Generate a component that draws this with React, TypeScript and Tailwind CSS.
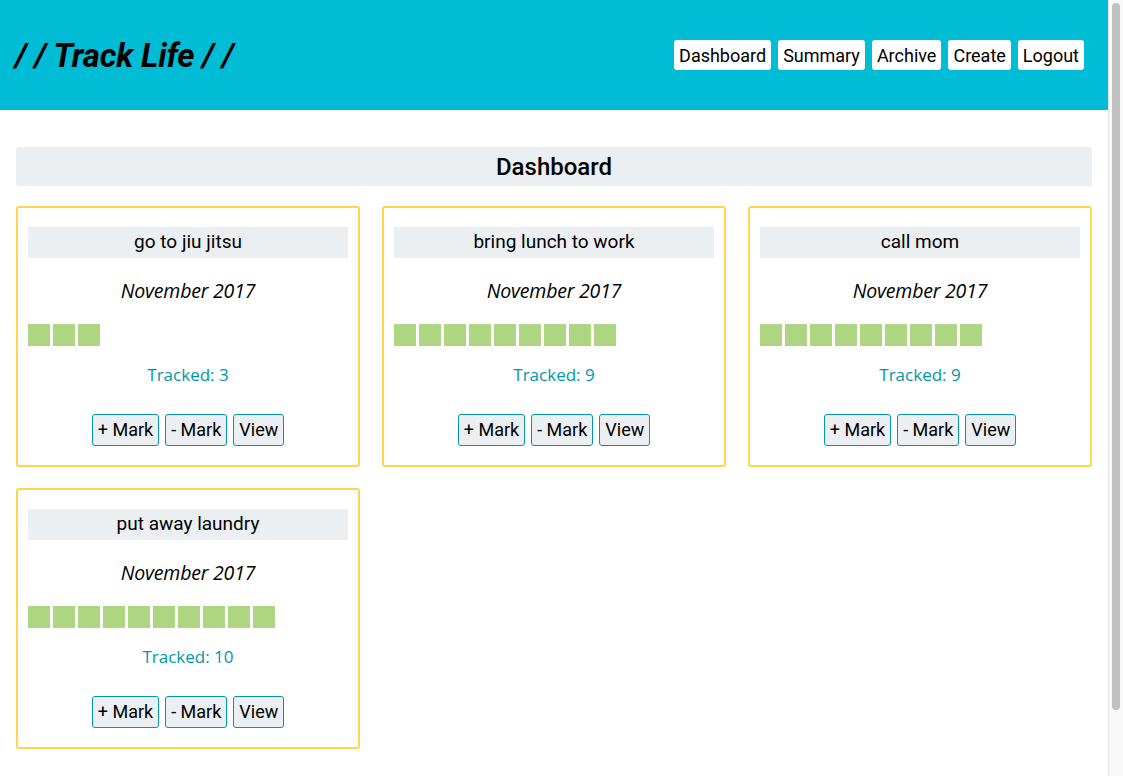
import React from "react";

const habits = [
  { name: "go to jiu jitsu", count: 3 },
  { name: "bring lunch to work", count: 9 },
  { name: "call mom", count: 9 },
  { name: "put away laundry", count: 10 },
];

function Card({ name, count }: { name: string; count: number }) {
  return (
    <div className="border-2 border-[#ffd54f] rounded-[3px] px-[10px] pt-[19px] pb-[19px] flex flex-col">
      <div className="bg-[#eceff1] h-[31px] flex items-center justify-center text-[19px] text-black font-['Roboto',sans-serif]">
        {name}
      </div>
      <div className="mt-[20px] h-[26px] flex items-center justify-center italic text-[19.5px] text-black font-['Open_Sans',sans-serif] tracking-[-0.2px]">
        November 2017
      </div>
      <div className="mt-[20px] flex gap-[3px] h-[22px]">
        {Array.from({ length: count }).map((_, i) => (
          <div key={i} className="w-[22px] h-[22px] bg-[#aed581]" />
        ))}
      </div>
      <div className="mt-[17px] h-[24px] flex items-center justify-center text-[17px] text-[#0097a7] font-['Open_Sans',sans-serif]">
        Tracked: {count}
      </div>
      <div className="mt-[27px] flex justify-center gap-[6px] font-['Roboto',sans-serif]">
        {["+ Mark", "- Mark", "View"].map((b) => (
          <button
            key={b}
            className="h-[32px] px-[5px] bg-[#eceff1] border border-[#0097a7] rounded-[3px] text-[18px] leading-none text-black"
          >
            {b}
          </button>
        ))}
      </div>
    </div>
  );
}

export default function App() {
  return (
    <div className="h-screen flex overflow-hidden bg-white font-['Roboto',sans-serif]">
      <div className="flex-1 min-w-0 overflow-y-auto [scrollbar-width:none]">
        <div className="min-h-[848px]">
          <header className="h-[110px] bg-[#00bcd4] flex items-center justify-between pl-[15px] pr-[24px]">
            <h1 className="text-[33px] font-bold italic text-black tracking-[-0.2px] leading-none">/ / Track Life / /</h1>
            <nav className="flex gap-[7px]">
              {["Dashboard", "Summary", "Archive", "Create", "Logout"].map((t) => (
                <a key={t} className="h-[30px] px-[5px] bg-white rounded-[3px] text-[18px] text-black flex items-center">
                  {t}
                </a>
              ))}
            </nav>
          </header>
          <main className="px-[16px] pt-[37px] pb-[99px]">
            <div className="h-[39px] bg-[#eceff1] rounded-[3px] flex items-center justify-center text-[24px] font-medium text-black">
              Dashboard
            </div>
            <div className="mt-[20px] grid grid-cols-3 gap-x-[22px] gap-y-[21px]">
              {habits.map((h) => (
                <Card key={h.name} name={h.name} count={h.count} />
              ))}
            </div>
          </main>
        </div>
      </div>
      <div className="w-[15px] shrink-0 bg-[#f8f8f8] border-l border-[#e6e6e6] pt-[3px] pl-[3px] pr-[2px]">
        <div className="h-[707px] w-[8px] rounded-full bg-[#c1c1c1]" />
      </div>
    </div>
  );
}
